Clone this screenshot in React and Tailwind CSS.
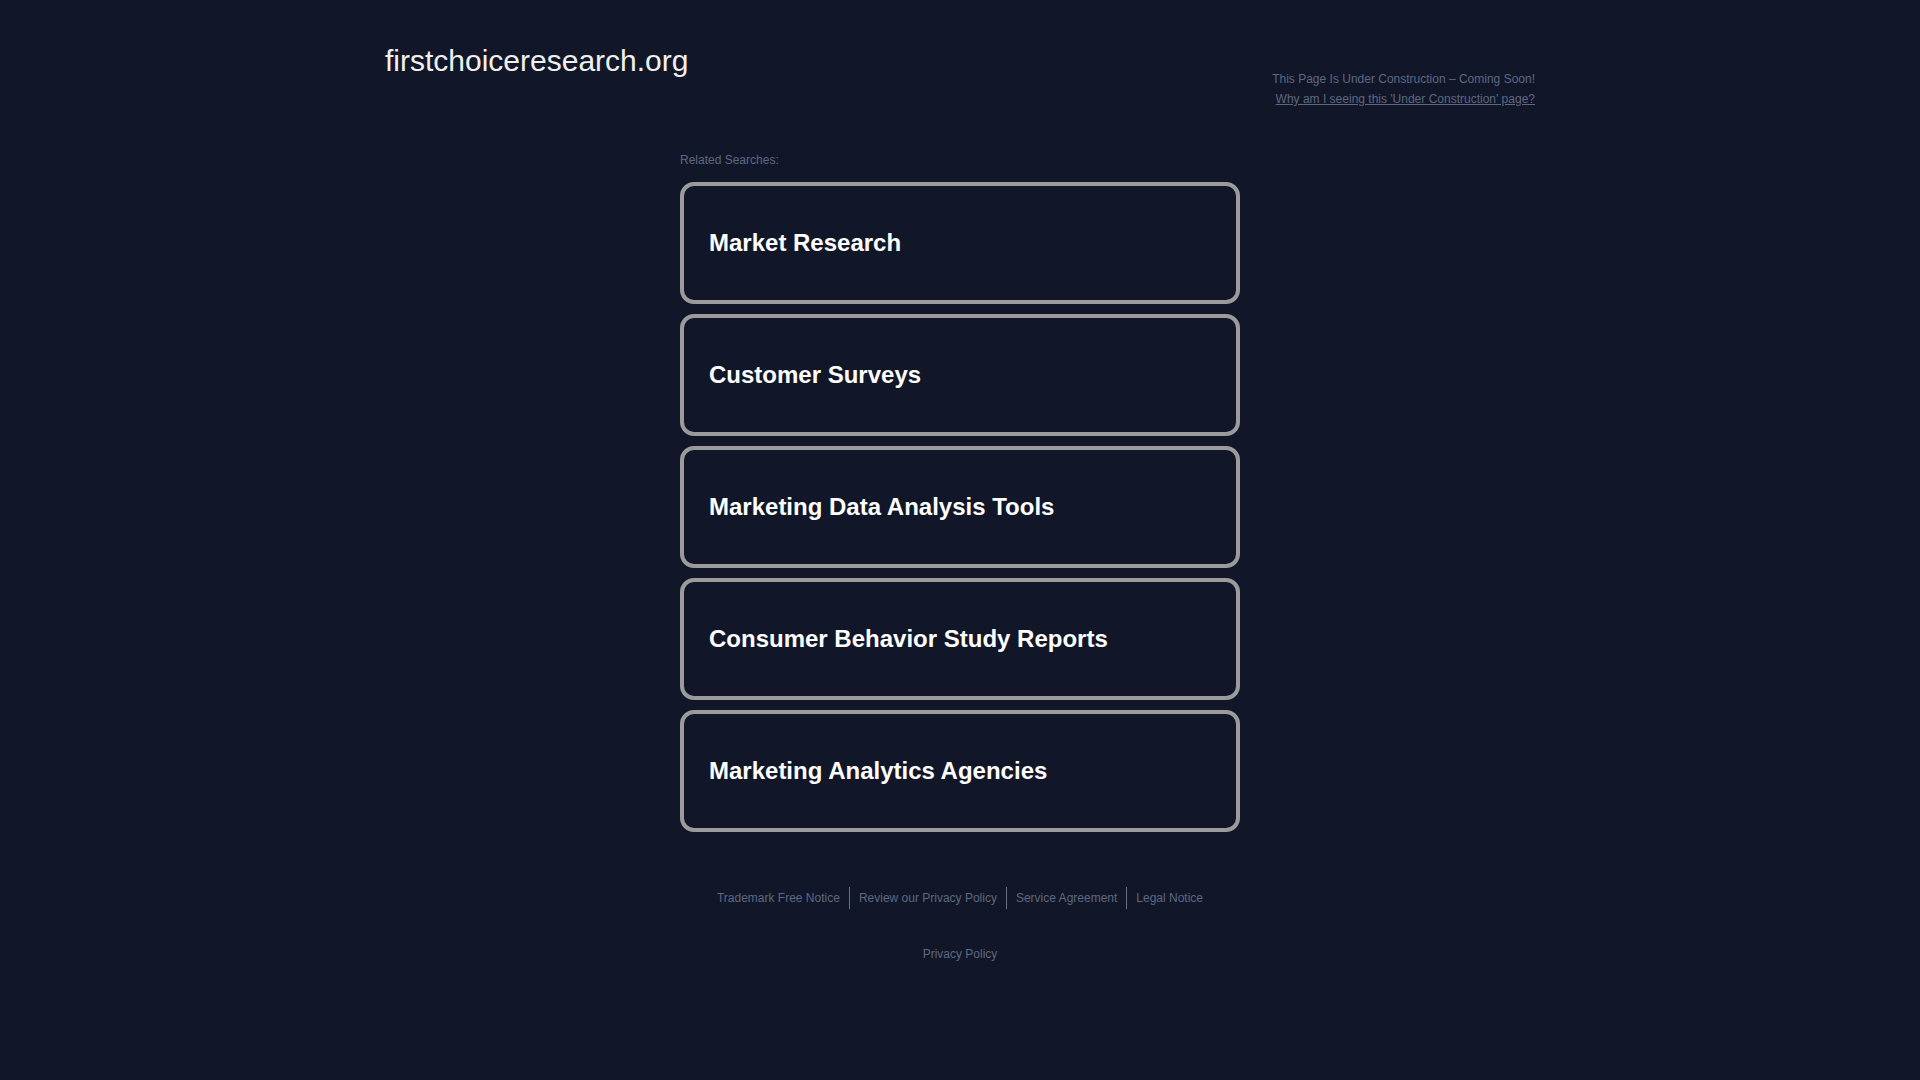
const SEARCHES = [
  'Market Research',
  'Customer Surveys',
  'Marketing Data Analysis Tools',
  'Consumer Behavior Study Reports',
  'Marketing Analytics Agencies',
]

const FOOTER_LINKS = [
  'Trademark Free Notice',
  'Review our Privacy Policy',
  'Service Agreement',
  'Legal Notice',
]

function Header() {
  return (
    <header className="mx-auto flex w-[1150px] items-start justify-between pt-[43px]">
      <a href="#" className="text-[30px] leading-[36px] text-[#f0f0f0]">
        firstchoiceresearch.org
      </a>
      <div className="mt-[26px] text-right text-[12px] leading-[20px] text-[#5f6780]">
        <div>This Page Is Under Construction – Coming Soon!</div>
        <a href="#" className="block underline">
          Why am I seeing this 'Under Construction' page?
        </a>
      </div>
    </header>
  )
}

function SearchCard({ label }) {
  return (
    <a
      href="#"
      className="flex h-[122px] items-center rounded-[14px] border-4 border-[#9b9b9b] pl-[25px] text-[24px] font-bold text-white"
    >
      {label}
    </a>
  )
}

export default function App() {
  return (
    <div className="min-h-screen bg-[#111729] font-['Liberation_Sans',Arial,sans-serif]">
      <Header />

      <main className="mx-auto w-[560px] pt-[43px]">
        <div className="text-[12px] leading-[16px] text-[#5f6780]">Related Searches:</div>
        <div className="mt-[14px] flex flex-col gap-[10px]">
          {SEARCHES.map((s) => (
            <SearchCard key={s} label={s} />
          ))}
        </div>
      </main>

      <footer className="pt-[55px] text-center text-[12px] text-[#5f6780]">
        <div className="flex justify-center">
          {FOOTER_LINKS.map((l, i) => (
            <a
              key={l}
              href="#"
              className={
                i === 0
                  ? 'px-[9px] leading-[22px]'
                  : 'border-l border-[#6b7280] px-[9px] leading-[22px]'
              }
            >
              {l}
            </a>
          ))}
        </div>
        <div className="mt-[37px] leading-[16px]">
          <a href="#">Privacy Policy</a>
        </div>
      </footer>
    </div>
  )
}
